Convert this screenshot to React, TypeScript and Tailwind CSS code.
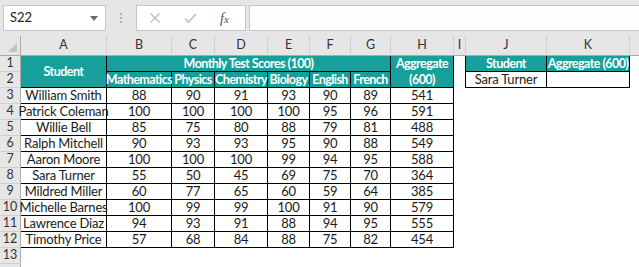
const cols = ["A", "B", "C", "D", "E", "F", "G", "H", "I", "J", "K"];

const rows: Array<[string, number[], number]> = [
  ["William Smith", [88, 90, 91, 93, 90, 89], 541],
  ["Patrick Coleman", [100, 100, 100, 100, 95, 96], 591],
  ["Willie Bell", [85, 75, 80, 88, 79, 81], 488],
  ["Ralph Mitchell", [90, 93, 93, 95, 90, 88], 549],
  ["Aaron Moore", [100, 100, 100, 99, 94, 95], 588],
  ["Sara Turner", [55, 50, 45, 69, 75, 70], 364],
  ["Mildred Miller", [60, 77, 65, 60, 59, 64], 385],
  ["Michelle Barnes", [100, 99, 99, 100, 91, 90], 579],
  ["Lawrence Diaz", [94, 93, 91, 88, 94, 95], 555],
  ["Timothy Price", [57, 68, 84, 88, 75, 82], 454],
];

const subjects = ["Mathematics", "Physics", "Chemistry", "Biology", "English", "French"];

const rowHead = "flex items-center justify-center bg-[#e6e6e6] border-b border-r border-b-[#d0d0d0] border-r-[#ababab] text-[#333] text-[12.5px]";
const teal = "flex items-center justify-center bg-[#17a09b] text-white font-bold text-[12.5px] tracking-[-0.55px] whitespace-nowrap border-r border-b border-black leading-[16px]";
const cell = "flex items-center justify-center border-r border-b border-black text-[13px] tracking-[-0.2px] text-[#1a1a1a] whitespace-nowrap overflow-visible";

function TopBar() {
  return (
    <div className="flex h-[36px] items-start bg-[#e6e6e6] pt-[5px]">
      <div className="ml-[3px] flex h-[26px] w-[103px] items-center justify-between border border-[#c6c6c6] bg-white pl-[6px] pr-[7px]">
        <span className="text-[13px] text-[#222]">S22</span>
        <svg width="8" height="5" viewBox="0 0 8 5">
          <path d="M0 0h8L4 5z" fill="#6b6b6b" />
        </svg>
      </div>
      <div className="flex h-[26px] w-[30px] flex-col items-center justify-center gap-[2px]">
        <span className="h-[2px] w-[2px] bg-[#b0b0b0]" />
        <span className="h-[2px] w-[2px] bg-[#b0b0b0]" />
        <span className="h-[2px] w-[2px] bg-[#b0b0b0]" />
      </div>
      <div className="flex h-[26px] w-[110px] items-center border border-[#c6c6c6] bg-white">
        <svg className="ml-[12px]" width="12" height="12" viewBox="0 0 12 12">
          <path d="M1.5 1.5l9 9M10.5 1.5l-9 9" stroke="#bdbdbd" strokeWidth="1.4" />
        </svg>
        <svg className="ml-[23px]" width="13" height="12" viewBox="0 0 13 12">
          <path d="M1 6.5l3.5 3.5L12 2" stroke="#bdbdbd" strokeWidth="1.6" fill="none" />
        </svg>
        <span className="ml-[23px] font-['Liberation_Serif',serif] text-[14px] italic text-[#555]">
          f<span className="text-[11px]">x</span>
        </span>
      </div>
      <div className="ml-[3px] h-[26px] flex-1 border-y border-l border-[#c6c6c6] bg-[#fdfdfd]" />
    </div>
  );
}

export default function App() {
  return (
    <div className="h-[267px] w-[639px] overflow-hidden bg-white font-['Lato',sans-serif]">
      <TopBar />
      <div className="grid grid-cols-[21px_86px_65px_43px_53px_42px_41px_40px_63px_12px_81px_83px_1fr] grid-rows-[20px_repeat(14,16px)]">
        {/* column headers */}
        <div className="relative border-r border-b border-r-[#ababab] border-b-[#ababab] bg-[#e6e6e6]">
          <svg className="absolute bottom-[3px] right-[3px]" width="9" height="9" viewBox="0 0 9 9">
            <path d="M9 0v9H0z" fill="#c2c2c2" />
          </svg>
        </div>
        {cols.map((c) => (
          <div
            key={c}
            className="flex items-center justify-center border-r border-b border-r-[#d0d0d0] border-b-[#ababab] bg-[#e6e6e6] text-[12.5px] text-[#333]"
          >
            {c}
          </div>
        ))}
        <div className="border-b border-b-[#ababab] bg-[#e6e6e6]" />

        {/* row 1 */}
        <div className={rowHead}>1</div>
        <div className={`${teal} row-span-2`}>Student</div>
        <div className={`${teal} col-span-6`}>Monthly Test Scores (100)</div>
        <div className={`${teal} row-span-2 flex-col`}>
          <span>Aggregate</span>
          <span>(600)</span>
        </div>
        <div className="border-r border-black" />
        <div className={teal}>Student</div>
        <div className={teal}>Aggregate (600)</div>
        <div />

        {/* row 2 */}
        <div className={rowHead}>2</div>
        {subjects.map((s) => (
          <div key={s} className={teal}>
            {s}
          </div>
        ))}
        <div className="border-r border-black" />
        <div className={cell}>Sara Turner</div>
        <div className={cell} />
        <div />

        {rows.map(([name, scores, total], i) => (
          <div key={name} className="contents">
            <div className={rowHead}>{i + 3}</div>
            <div className={cell}>{name}</div>
            {scores.map((s, j) => (
              <div key={j} className={cell}>
                {s}
              </div>
            ))}
            <div className={cell}>{total}</div>
            <div className="col-span-4" />
          </div>
        ))}

        <div className={rowHead}>13</div>
        <div className="col-span-12" />
        <div className={rowHead} />
        <div className="col-span-12" />
      </div>
    </div>
  );
}
